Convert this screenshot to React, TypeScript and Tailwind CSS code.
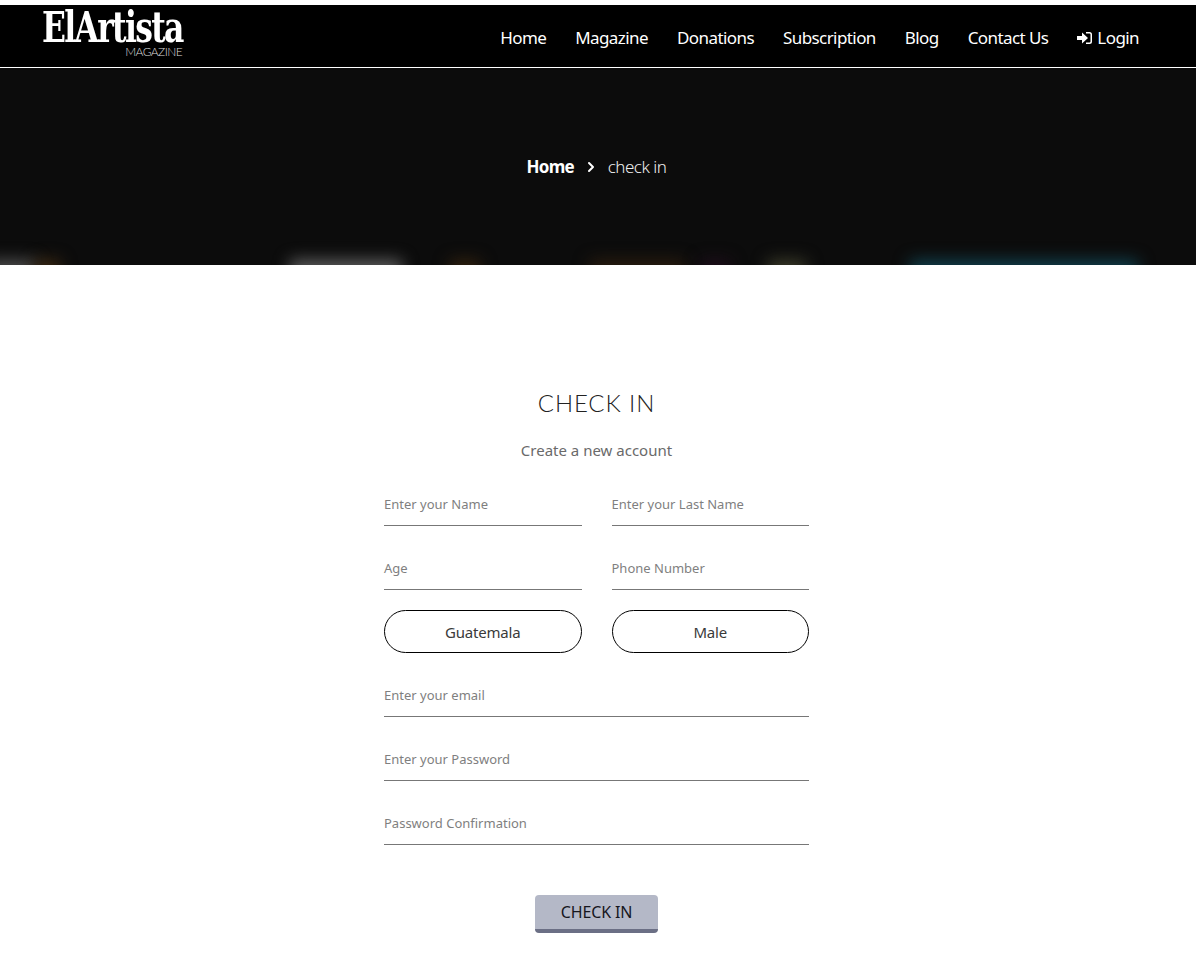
import { ChevronRight } from "lucide-react";

const links = ["Home", "Magazine", "Donations", "Subscription", "Blog", "Contact Us"];

const glows = [
  "left-[-14px] w-[50px] bg-[#505050]",
  "left-[35px] w-[25px] bg-[#3e2a12]",
  "left-[290px] w-[112px] bg-[#606060]",
  "left-[450px] w-[30px] bg-[#33220e]",
  "left-[590px] w-[95px] bg-[#2a1c0e]",
  "left-[700px] w-[30px] bg-[#1e0d1b]",
  "left-[768px] w-[38px] bg-[#3c3c2a]",
  "left-[910px] w-[228px] bg-[#10414e]",
];

function Field({ label }: { label: string }) {
  return (
    <div className="h-[44px] border-b border-[#777777] flex items-start pt-[12px]">
      <span className="text-[13px] leading-[20px] text-[#7f7f7f]">{label}</span>
    </div>
  );
}

function Pill({ label }: { label: string }) {
  return (
    <div className="h-[43px] rounded-[22px] border border-black flex items-center justify-center text-[15px] tracking-[-0.2px] text-[#3a3a3a] pt-[2px]">
      {label}
    </div>
  );
}

export default function App() {
  return (
    <div className="min-h-[962px] bg-white pt-[5px] font-['Noto_Sans','Open_Sans',sans-serif]">
      {/* NAV */}
      <header className="h-[63px] bg-black border-b border-white flex items-center justify-between pl-[42px] pr-[57px]">
        <div className="w-[142px] flex flex-col items-end text-white -mt-[8px]">
          <span className="self-start font-['DejaVu_Serif',serif] font-bold text-[37px] leading-[36px] tracking-[-2px] scale-x-[0.85] scale-y-[1.15] origin-top-left whitespace-nowrap">
            ElArtista
          </span>
          <span className="font-['Lato',sans-serif] font-light text-[12px] leading-[12px] tracking-[-0.6px] text-[#dddddd] mt-[4px] mr-[2px]">
            MAGAZINE
          </span>
        </div>
        <nav className="flex items-center gap-[29px] text-white text-[17px] leading-[24px] tracking-[-0.58px] mt-[4px]">
          {links.map((link) => (
            <a key={link}>{link}</a>
          ))}
          <a className="flex items-center gap-[5px]">
            <svg width="15" height="14" viewBox="0 0 15 14" fill="currentColor">
              <path d="M0 5h5V1.500L11 7l-6 5.500V9H0z" />
              <path d="M9 1h3.500A2.500 2.500 0 0 1 15 3.500v7a2.500 2.500 0 0 1-2.500 2.500H9v-1.500h3.500a1 1 0 0 0 1-1v-7a1 1 0 0 0-1-1H9z" />
            </svg>
            Login
          </a>
        </nav>
      </header>

      {/* BREADCRUMB */}
      <section className="relative h-[197px] bg-[#0c0c0c] overflow-hidden flex items-center justify-center text-white pr-[3px]">
        {glows.map((g) => (
          <div key={g} className={`absolute bottom-[-15px] h-[20px] blur-[8px] ${g}`} />
        ))}
        <div className="flex items-center text-[17px] leading-[24px] tracking-[-0.5px]">
          <span className="font-bold tracking-[-0.8px]">Home</span>
          <ChevronRight size={16} strokeWidth={3} className="mx-[9px]" />
          <span className="font-light text-[#eeeeee]">check in</span>
        </div>
      </section>

      {/* FORM */}
      <main className="flex flex-col items-center pt-[120px] pr-[3px]">
        <h1 className="font-['Lato',sans-serif] font-light text-[24px] leading-[36px] tracking-[0.9px] text-[#222222]">
          CHECK IN
        </h1>
        <p className="mt-[17px] text-[15px] leading-[24px] text-[#6a6a6a]">Create a new account</p>

        <div className="w-[425px] mt-[20px]">
          <div className="grid grid-cols-2 gap-x-[30px] gap-y-[20px]">
            <Field label="Enter your Name" />
            <Field label="Enter your Last Name" />
            <Field label="Age" />
            <Field label="Phone Number" />
          </div>
          <div className="grid grid-cols-2 gap-x-[30px] mt-[20px]">
            <Pill label="Guatemala" />
            <Pill label="Male" />
          </div>
          <div className="flex flex-col gap-[20px] mt-[20px]">
            <Field label="Enter your email" />
            <Field label="Enter your Password" />
            <Field label="Password Confirmation" />
          </div>
          <div className="flex justify-center mt-[50px]">
            <button className="w-[123px] h-[38px] rounded-[4px] bg-[#b4b8c7] border-b-[4px] border-[#6b6f85] text-[16px] tracking-[-0.15px] text-[#16161d]">
              CHECK IN
            </button>
          </div>
        </div>
      </main>
    </div>
  );
}
